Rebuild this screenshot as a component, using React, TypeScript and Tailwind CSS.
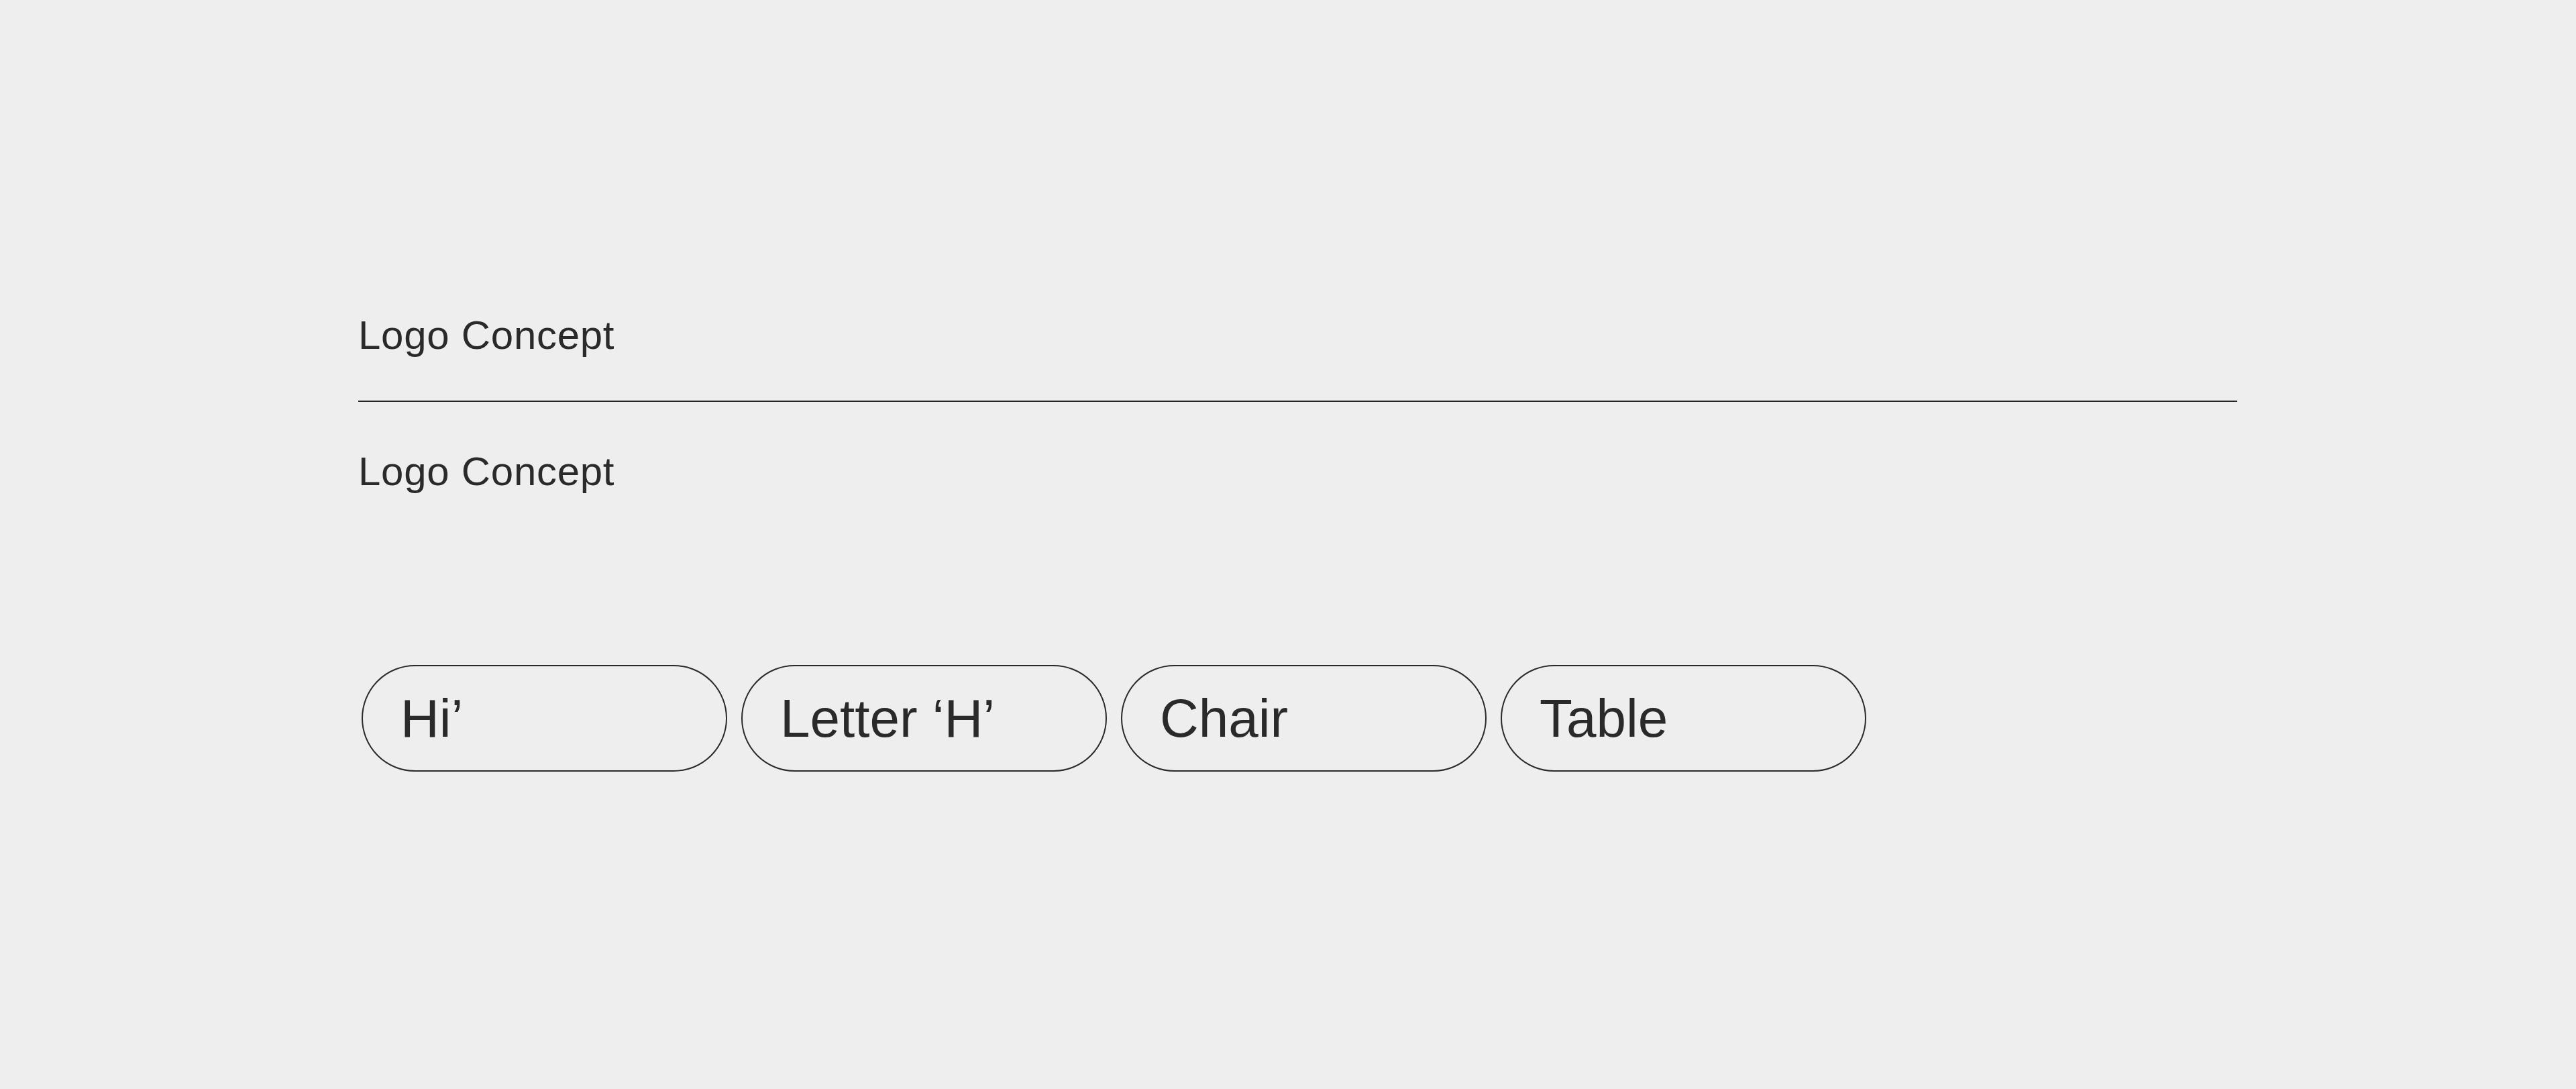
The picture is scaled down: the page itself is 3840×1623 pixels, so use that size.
const concepts = ["Hi’", "Letter ‘H’", "Chair", "Table"];

export default function App() {
  return (
    <div className="min-h-screen bg-[#eeeeee] pl-[534px] pr-[505px] pt-[470px] font-['Liberation_Sans',Arial,sans-serif] text-[#2a2a2a]">
      <p className="text-[60px] leading-none tracking-[0.012em]">Logo Concept</p>
      <div className="mt-[67px] h-[2px] bg-[#262626]" />
      <p className="mt-[74px] text-[60px] leading-none tracking-[0.012em]">Logo Concept</p>

      <div className="mt-[258px] ml-[5px] flex gap-[21px]">
        {concepts.map((label) => (
          <div
            key={label}
            className="flex h-[159px] w-[545px] items-center rounded-full border-2 border-[#2a2a2a] pl-14 text-[80px] leading-none"
          >
            {label}
          </div>
        ))}
      </div>
    </div>
  );
}
